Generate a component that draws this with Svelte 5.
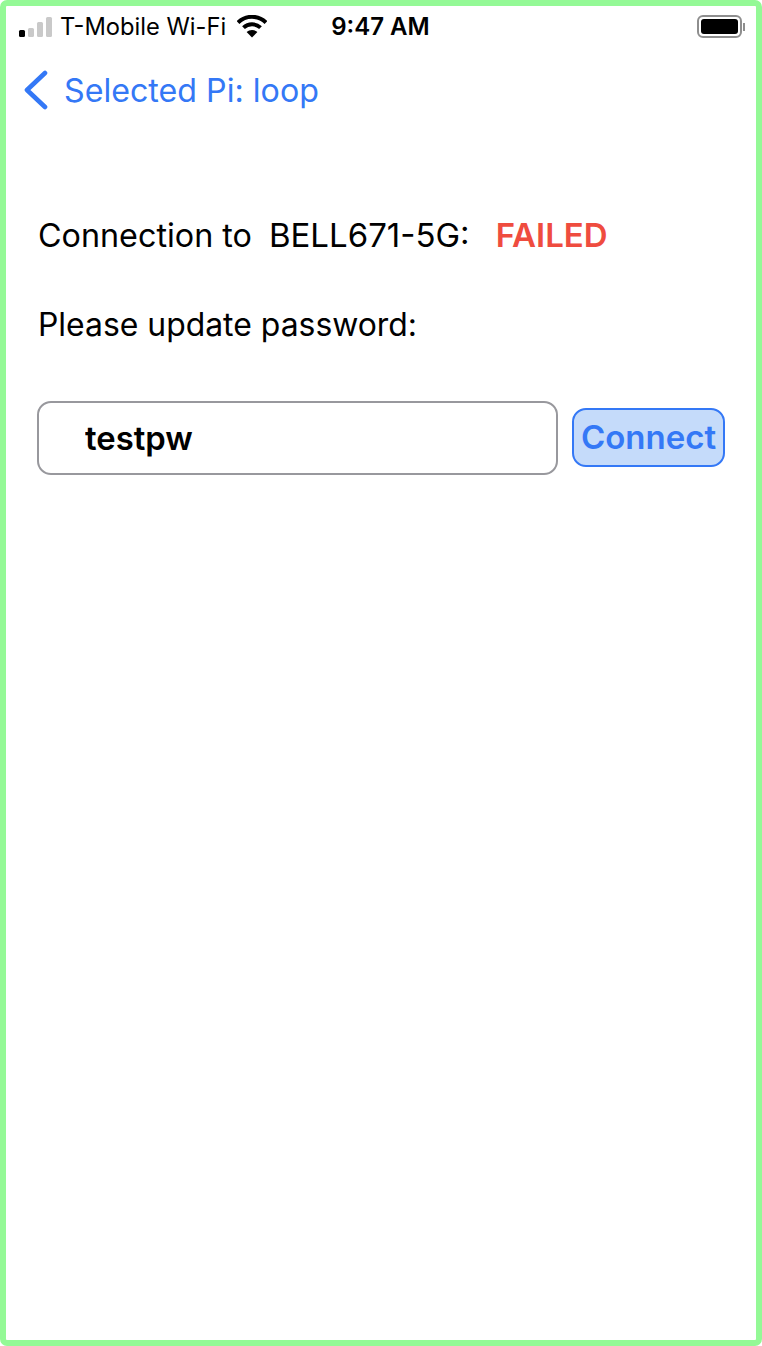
<script>
  let password = "testpw";
</script>

<div class="frame">
  <div class="status">
    <div class="signal">
      <span class="bar on b1"></span>
      <span class="bar b2"></span>
      <span class="bar b3"></span>
      <span class="bar b4"></span>
    </div>
    <span class="carrier">T-Mobile Wi-Fi</span>
    <svg class="wifi" width="30" height="23" viewBox="0 0 30 23">
      <path d="M1 7.5 A20 20 0 0 1 29 7.5" fill="none" stroke="#000" stroke-width="4" />
      <path d="M6.5 12.6 A12.5 12.5 0 0 1 23.5 12.6" fill="none" stroke="#000" stroke-width="4" />
      <path d="M9.6 17 L15 22.6 L20.4 17 A8 8 0 0 0 9.6 17 Z" fill="#000" />
    </svg>
    <span class="time">9:47 AM</span>
    <div class="battery">
      <span class="cell"><span class="charge"></span></span>
      <span class="nub"></span>
    </div>
  </div>

  <div class="nav">
    <svg width="26" height="40" viewBox="0 0 26 40">
      <path d="M22 3 L4 20 L22 37" fill="none" stroke="#3478f6" stroke-width="4.6" stroke-linecap="round" stroke-linejoin="round" />
    </svg>
    <span class="nav-title">Selected Pi: loop</span>
  </div>

  <div class="content">
    <div class="row">
      <span class="label">Connection to</span>
      <span class="ssid">BELL671-5G:</span>
      <span class="failed">FAILED</span>
    </div>
    <div class="row prompt">Please update password:</div>
    <div class="form">
      <input class="password" bind:value={password} />
      <button class="connect">Connect</button>
    </div>
  </div>
</div>

<style>
  :global(body) {
    margin: 0;
    background: #fff;
  }

  .frame {
    box-sizing: border-box;
    width: 762px;
    height: 1346px;
    border: 6px solid #94f996;
    border-radius: 7px;
    background: #fff;
    font-family: Inter, "Liberation Sans", sans-serif;
    color: #000;
    overflow: hidden;
  }

  .status {
    display: flex;
    align-items: center;
    height: 41px;
    padding-left: 13px;
  }

  .signal {
    display: flex;
    align-items: flex-end;
    gap: 3px;
    width: 33px;
    height: 20px;
  }

  .bar {
    width: 6px;
    border-radius: 1.5px;
    background: #c9c9c9;
  }

  .bar.on {
    background: #000;
  }

  .b1 { height: 7px; }
  .b2 { height: 9px; }
  .b3 { height: 15px; }
  .b4 { height: 20px; }

  .carrier {
    margin-left: 8px;
    font-size: 23.7px;
  }

  .wifi {
    margin-left: 11px;
  }

  .time {
    margin-left: 64px;
    font-size: 24px;
    font-weight: 600;
  }

  .battery {
    display: flex;
    align-items: center;
    margin-left: auto;
    margin-right: 11px;
    gap: 1px;
  }

  .cell {
    box-sizing: border-box;
    display: block;
    width: 45px;
    height: 23px;
    padding: 2px;
    border: 2px solid #8e8e8e;
    border-radius: 6px;
  }

  .charge {
    display: block;
    height: 100%;
    background: #000;
    border-radius: 3px;
  }

  .nub {
    width: 2px;
    height: 8px;
    background: #8e8e8e;
  }

  .nav {
    display: flex;
    align-items: center;
    height: 40px;
    margin-top: 23px;
    padding-left: 17px;
    gap: 15px;
    color: #3478f6;
  }

  .nav-title {
    font-size: 32.2px;
  }

  .content {
    padding: 103px 31px 0 32px;
  }

  .row {
    display: flex;
    align-items: center;
    height: 44px;
    font-size: 32px;
  }

  .label {
    font-size: 32.3px;
  }

  .ssid {
    margin-left: 17px;
    font-size: 33px;
  }

  .failed {
    margin-left: 26px;
    color: #ef4c3f;
    font-size: 33px;
    font-weight: 600;
  }

  .prompt {
    margin-top: 45px;
    font-size: 31.9px;
  }

  .form {
    display: flex;
    align-items: center;
    gap: 14px;
    margin-top: 55px;
  }

  .password {
    box-sizing: border-box;
    width: 521px;
    height: 74px;
    margin-left: -1px;
    padding: 0 0 0 46px;
    border: 2px solid #98989d;
    border-radius: 14px;
    outline: none;
    background: #fff;
    color: #000;
    font-family: inherit;
    font-size: 32.8px;
    font-weight: 600;
  }

  .connect {
    box-sizing: border-box;
    width: 153px;
    height: 59px;
    margin-bottom: 2px;
    padding: 0;
    border: 2px solid #3478f6;
    border-radius: 14px;
    background: #c5dbfa;
    color: #3478f6;
    font-family: inherit;
    font-size: 33px;
    font-weight: 600;
  }
</style>
